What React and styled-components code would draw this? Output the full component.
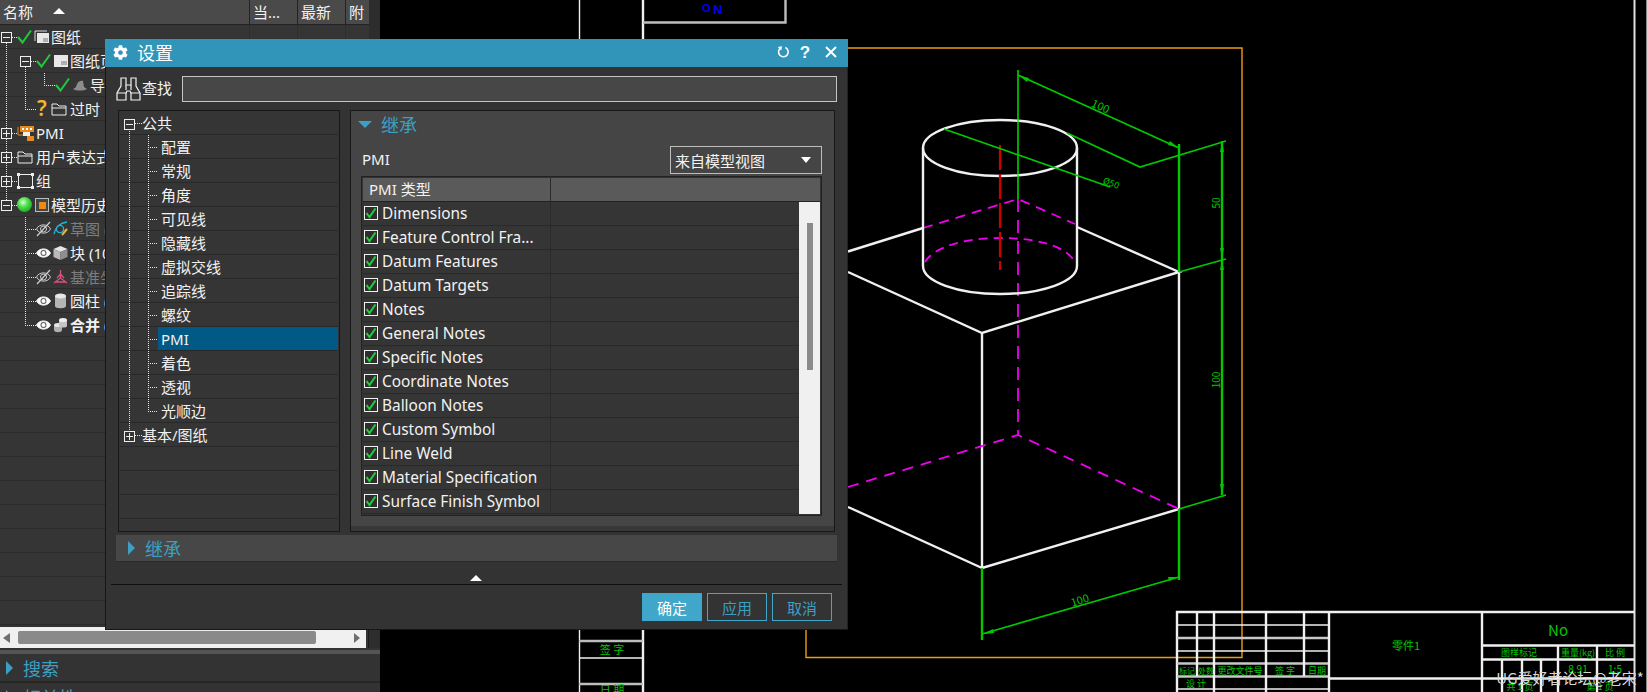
import React from "react";
import styled, { createGlobalStyle } from "styled-components";
import { FaCog } from "react-icons/fa";

const GlobalStyle = createGlobalStyle`
  html, body { margin: 0; padding: 0; background: #000; overflow: hidden; }
  * { box-sizing: border-box; }
  body {
    font-family: "Noto Sans", "Noto Sans CJK SC", sans-serif;
    font-size: 15px;
    color: #f2f2f2;
  }
`;

const Page = styled.div`
  position: relative;
  display: flex;
  width: 1647px;
  height: 692px;
  overflow: hidden;
`;

/* ---------- left navigator ---------- */

const Navigator = styled.aside`
  flex: 0 0 380px;
  display: flex;
  flex-direction: column;
  height: 692px;
  overflow: hidden;
  background: #333;
`;

const NavFrame = styled.div`
  display: flex;
  flex-direction: column;
  flex: 0 0 648px;
  border-right: 11px solid #2d2d2d;
  box-shadow: inset -1px 0 0 #1b1b1b;
`;

const HeaderRow = styled.div`
  display: flex;
  flex: 0 0 25px;
  gap: 1px;
  border-bottom: 1px solid #232323;
  background: #232323;
`;

const HeaderCell = styled.div`
  flex: 0 0 ${(p) => p.$w}px;
  display: flex;
  align-items: center;
  gap: 20px;
  padding: 0 0 2px 3px;
  background: #4a4a4a;
  overflow: hidden;
  white-space: nowrap;
`;

const SortMark = styled.span`
  width: 0;
  height: 0;
  border-left: 6px solid transparent;
  border-right: 6px solid transparent;
  border-bottom: 6px solid #fff;
`;

const NavRows = styled.div`
  flex: 1;
  min-height: 0;
  overflow: hidden;
`;

const NavRow = styled.div`
  display: flex;
  align-items: center;
  height: 24px;
  border-bottom: 1px solid #2a2a2a;
  white-space: nowrap;
  background-color: #353535;
  background-image:
    linear-gradient(#2e2e2e, #2e2e2e),
    linear-gradient(#2e2e2e, #2e2e2e),
    linear-gradient(#2e2e2e, #2e2e2e);
  background-size: 1px 100%;
  background-repeat: no-repeat;
  background-position: 249px 0, 297px 0, 345px 0;
`;

const guideImage = (kind) => {
  const v = "repeating-linear-gradient(to bottom, #e4e4e4 0 1px, transparent 1px 2px)";
  const h = "repeating-linear-gradient(to right, #e4e4e4 0 1px, transparent 1px 2px)";
  if (kind === "v") return v;
  if (kind === "n") return "none";
  return `${v}, ${h}`;
};

const guideSize = (kind) => {
  if (kind === "t") return "1px 100%, 100% 1px";
  if (kind === "e" || kind === "s") return "1px 12px, 100% 1px";
  return "1px 100%";
};

const guidePos = (kind, x) => {
  if (kind === "s") return `${x}px 12px, ${x}px 12px`;
  if (kind === "t" || kind === "e") return `${x}px 0, ${x}px 12px`;
  return `${x}px 0`;
};

const Guide = styled.span`
  flex: 0 0 ${(p) => p.$w}px;
  align-self: stretch;
  display: flex;
  align-items: center;
  background-repeat: no-repeat;
  background-image: ${(p) => guideImage(p.$kind)};
  background-size: ${(p) => guideSize(p.$kind)};
  background-position: ${(p) => guidePos(p.$kind, p.$x)};
`;

const ExpandBox = styled.span`
  width: 11px;
  height: 11px;
  margin-left: ${(p) => p.$x - 5}px;
  margin-top: ${(p) => p.$dy ?? 1}px;
  border: 1px solid #eee;
  background-color: #353535;
  background-repeat: no-repeat;
  background-image: linear-gradient(#eee, #eee)
    ${(p) => (p.$open ? "" : ", linear-gradient(#eee, #eee)")};
  background-size: 7px 1px ${(p) => (p.$open ? "" : ", 1px 7px")};
  background-position: center;
`;

const NavIcon = styled.svg`
  flex: 0 0 auto;
  display: block;
  margin-right: ${(p) => p.$gap ?? 2}px;
`;

const QuestionMark = styled.span`
  flex: 0 0 14px;
  color: #f2b632;
  font-weight: 600;
  font-size: 21px;
  line-height: 1;
`;

const NavLabel = styled.span`
  color: ${(p) => (p.$muted ? "#7d7d7d" : "#f2f2f2")};
  font-weight: ${(p) => (p.$bold ? 700 : 400)};
`;

const NavScroll = styled.div`
  display: flex;
  align-items: center;
  flex: 0 0 21px;
  margin-right: 3px;
  padding: 0 6px 0 3px;
  background: #f0f0f0;
`;

const ScrollArrow = styled.span`
  width: 0;
  height: 0;
  border-top: 5px solid transparent;
  border-bottom: 5px solid transparent;
  ${(p) => (p.$right ? "border-left: 6px solid #6e6e6e;" : "border-right: 7px solid #6e6e6e;")}
`;

const NavThumb = styled.span`
  width: 298px;
  height: 13px;
  margin: 0 auto 0 8px;
  border-radius: 2px;
  background: #8a8a8a;
`;

const NavSplit = styled.div`
  flex: 0 0 4px;
  margin-top: 2px;
  background: #555;
`;

const NavSection = styled.div`
  display: flex;
  align-items: center;
  flex: 0 0 28px;
  gap: 10px;
  padding: 1px 0 0 6px;
  border-bottom: 2px solid #262626;
  color: #3c9fc4;
  font-size: 18px;
`;

const SideTriangle = styled.span`
  width: 0;
  height: 0;
  border-top: 7px solid transparent;
  border-bottom: 7px solid transparent;
  border-left: 7px solid #3c9fc4;
`;

/* ---------- little tree icons ---------- */

const Svg = ({ w = 15, h = 16, gap, children }) => (
  <NavIcon width={w} height={h} viewBox={`0 0 ${w} ${h}`} $gap={gap}>
    {children}
  </NavIcon>
);

const Tick = () => (
  <Svg w={15} h={16}>
    <path d="M1 8 L5.5 13.5 L14 1.5" fill="none" stroke="#21c93a" strokeWidth="2" />
  </Svg>
);

const SheetsIcon = () => (
  <Svg>
    <path d="M1 12V2h12" fill="none" stroke="#ddd" strokeWidth="1" />
    <rect x="3" y="4" width="12" height="10" fill="#e8e8e8" />
    <path d="M9 10h5M9 12h5" stroke="#777" />
  </Svg>
);

const SheetIcon = () => (
  <Svg>
    <rect x="1" y="2" width="14" height="12" fill="#e8e8e8" />
    <path d="M8 9h6M8 11h6" stroke="#777" />
  </Svg>
);

const HatIcon = () => (
  <Svg w={16}>
    <path d="M1 12c2-1 3-1 4-5 1-3 5-4 6-3l1 6 3 2c-3 2-11 2-14 0z" fill="#8c8c8c" />
  </Svg>
);

const FolderIcon = () => (
  <Svg w={16} gap={3}>
    <path d="M1 14V3h5l2 2h7v9zM1 7h14" fill="none" stroke="#eee" strokeWidth="1" />
  </Svg>
);

const PmiIcon = () => (
  <Svg w={17} gap={2}>
    <rect x="3" y="1" width="14" height="6" fill="#e58a1f" />
    <path d="M5 3h2v2H5zM9 3h2v2H9zM13 3h2v2h-2z" fill="#fff" />
    <path d="M1 2v8h6" fill="none" stroke="#e58a1f" />
    <rect x="6" y="7" width="7" height="4" fill="#eee" />
    <rect x="10" y="11" width="7" height="5" fill="#e58a1f" />
  </Svg>
);

const GroupIcon = () => (
  <Svg w={17} gap={2}>
    <rect x="1.5" y="1.5" width="14" height="13" fill="none" stroke="#eee" />
    <path d="M0 0h3v3H0zM14 0h3v3h-3zM0 13h3v3H0zM14 13h3v3h-3z" fill="#eee" />
  </Svg>
);

const BallIcon = () => (
  <NavIcon width="15" height="15" viewBox="0 0 15 15" $gap={2}>
    <defs>
      <radialGradient id="ball" cx="0.4" cy="0.35" r="0.7">
        <stop offset="0" stopColor="#d8ffd8" />
        <stop offset="0.45" stopColor="#4ee04e" />
        <stop offset="1" stopColor="#1aa81a" />
      </radialGradient>
    </defs>
    <circle cx="7.5" cy="7.5" r="7.5" fill="url(#ball)" />
  </NavIcon>
);

const ModelIcon = () => (
  <Svg>
    <rect x="1.5" y="1.5" width="13" height="13" fill="#444" stroke="#bbb" />
    <rect x="5" y="5" width="7" height="7" fill="#ee8a17" />
  </Svg>
);

const EyeIcon = ({ off }) => (
  <Svg w={15} gap={2}>
    <path
      d="M0.5 8C3 2.5 12 2.5 14.5 8C12 13.5 3 13.5 0.5 8z"
      fill={off ? "none" : "#fff"}
      stroke={off ? "#cfcfcf" : "#eee"}
    />
    <circle cx="7.5" cy="8" r="3" fill={off ? "none" : "#5a5a5a"} stroke={off ? "#cfcfcf" : "none"} />
    {off ? <path d="M1 15 L14 1" stroke="#cfcfcf" strokeWidth="1.2" /> : <circle cx="7.5" cy="8" r="2" fill="#fff" />}
  </Svg>
);

const SketchIcon = () => (
  <Svg>
    <path d="M1 13 C3 5 7 2 14 1" fill="none" stroke="#25b6dc" strokeWidth="1.3" />
    <circle cx="7" cy="8" r="3.6" fill="none" stroke="#25b6dc" strokeWidth="1.3" />
    <path d="M9 14 L14 8" stroke="#e8b53a" strokeWidth="2" />
  </Svg>
);

const CubeIcon = () => (
  <Svg>
    <path d="M7.5 1 L14.5 4 L7.5 7 L0.5 4z" fill="#e6e6e6" />
    <path d="M0.5 4 L7.5 7V15L0.5 12z" fill="#b9b9b9" />
    <path d="M14.5 4 L7.5 7V15L14.5 12z" fill="#8f8f8f" />
  </Svg>
);

const DatumIcon = () => (
  <Svg>
    <path d="M7.5 1V9M7.5 9L1 14M7.5 9L14 14M3 13H12M4 9L7.5 5 11 9" fill="none" stroke="#d6537b" strokeWidth="1.3" />
  </Svg>
);

const CylinderIcon = () => (
  <Svg>
    <path d="M2 3v10c0 3 11 3 11 0V3z" fill="#b5b5b5" />
    <ellipse cx="7.5" cy="3" rx="5.5" ry="2.4" fill="#e8e8e8" />
  </Svg>
);

const UnionIcon = () => (
  <Svg>
    <path d="M1 8v5c0 3 8 3 8 0V8z" fill="#b0b0b0" />
    <ellipse cx="5" cy="8" rx="4" ry="2" fill="#e5e5e5" />
    <path d="M6 3v6c0 2 8 2 8 0V3z" fill="#c4c4c4" />
    <ellipse cx="10" cy="3" rx="4" ry="2" fill="#eee" />
  </Svg>
);

const EyeOff = () => <EyeIcon off />;

const navItems = [
  { cells: [["s", 17, "open"]], icons: [Tick, SheetsIcon], label: "图纸" },
  { cells: [["v", 19], ["s", 17, "open"]], icons: [Tick, SheetIcon], label: "图纸页" },
  { cells: [["v", 19], ["v", 19], ["e", 17]], icons: [Tick, HatIcon], label: "导入的" },
  { cells: [["v", 19], ["e", 18]], icons: ["?", FolderIcon], label: "过时" },
  { cells: [["t", 17, "closed"]], icons: [PmiIcon], label: "PMI" },
  { cells: [["t", 17, "closed"]], icons: [FolderIcon], label: "用户表达式" },
  { cells: [["t", 17, "closed"]], icons: [GroupIcon], label: "组" },
  { cells: [["e", 17, "open"]], icons: [BallIcon, ModelIcon], label: "模型历史记录" },
  { cells: [["n", 19], ["t", 17]], icons: [EyeOff, SketchIcon], label: "草图 (1)", muted: true },
  { cells: [["n", 19], ["t", 17]], icons: [EyeIcon, CubeIcon], label: "块 (100x100)" },
  { cells: [["n", 19], ["t", 17]], icons: [EyeOff, DatumIcon], label: "基准坐标系 (0)", muted: true },
  { cells: [["n", 19], ["t", 17]], icons: [EyeIcon, CylinderIcon], label: "圆柱 (2)" },
  { cells: [["n", 19], ["e", 17]], icons: [EyeIcon, UnionIcon], label: "合并 (3)", bold: true },
];

const NavTreeRow = ({ item }) => (
  <NavRow>
    {item.cells.map(([kind, w, box], i) => (
      <Guide key={i} $kind={kind} $w={w} $x={6}>
        {box ? <ExpandBox $x={6} $open={box === "open"} /> : null}
      </Guide>
    ))}
    {item.icons.map((Icon, i) =>
      Icon === "?" ? <QuestionMark key={i}>?</QuestionMark> : <Icon key={i} />
    )}
    <NavLabel $muted={item.muted} $bold={item.bold}>
      {item.label}
    </NavLabel>
  </NavRow>
);

const Navigation = () => (
  <Navigator>
    <NavFrame>
      <HeaderRow>
        <HeaderCell $w={249}>
          名称
          <SortMark />
        </HeaderCell>
        <HeaderCell $w={47}>当...</HeaderCell>
        <HeaderCell $w={47}>最新</HeaderCell>
        <HeaderCell $w={23}>附</HeaderCell>
      </HeaderRow>
      <NavRows>
        {navItems.map((item) => (
          <NavTreeRow key={item.label} item={item} />
        ))}
        {Array.from({ length: 12 }, (_, i) => (
          <NavRow key={i} />
        ))}
      </NavRows>
      <NavScroll>
        <ScrollArrow />
        <NavThumb />
        <ScrollArrow $right />
      </NavScroll>
    </NavFrame>
    <NavSplit />
    <NavSection>
      <SideTriangle />
      搜索
    </NavSection>
    <NavSection>
      <SideTriangle />
      相关性
    </NavSection>
  </Navigator>
);

/* ---------- settings dialog ---------- */

const Dialog = styled.section`
  position: absolute;
  left: 105px;
  top: 39px;
  width: 743px;
  height: 591px;
  display: flex;
  flex-direction: column;
  background: #333;
  border-left: 1px solid #161616;
  border-right: 1px solid #222;
  border-bottom: 1px solid #161616;
`;

const TitleBar = styled.header`
  flex: 0 0 27px;
  display: flex;
  align-items: center;
  margin: 0 -1px 0 -1px;
  padding: 0 11px 2px 8px;
  background: #3195b9;
  color: #fff;
  font-size: 18px;
`;

const TitleText = styled.span`
  margin-left: 9px;
  flex: 1;
`;

const TitleActions = styled.div`
  display: flex;
  align-items: center;
  gap: 9px;
`;

const HelpMark = styled.span`
  font-family: "Liberation Sans", sans-serif;
  font-weight: 700;
  font-size: 17px;
  line-height: 1;
  width: 12px;
  margin-right: 5px;
  text-align: center;
`;

const SearchRow = styled.div`
  display: flex;
  align-items: center;
  flex: 0 0 26px;
  margin-top: 9px;
  padding-left: 10px;
`;

const SearchLabel = styled.span`
  flex: 0 0 auto;
  width: 40px;
  margin-left: 1px;
  padding-bottom: 4px;
`;

const SearchInput = styled.div`
  flex: 0 0 655px;
  height: 26px;
  border: 1px solid #c4c4c4;
  background: #474747;
`;

const Content = styled.div`
  flex: 0 0 422px;
  min-height: 0;
  display: flex;
  gap: 10px;
  margin-top: 8px;
  padding-left: 12px;
`;

const TreePane = styled.div`
  flex: 0 0 222px;
  padding: 0 1px;
  border: 1px solid #181818;
  overflow: hidden;
`;

const TreeRow = styled.div`
  display: flex;
  align-items: center;
  height: 24px;
  border-bottom: 1px solid #292929;
  background: #353535;
  white-space: nowrap;
`;

const TreeLabel = styled.span`
  flex: 1;
  align-self: stretch;
  display: flex;
  align-items: center;
  padding-left: ${(p) => p.$pad}px;
  background: ${(p) => (p.$active ? "#005a85" : "transparent")};
`;

const SettingsPane = styled.div`
  flex: 0 0 485px;
  display: flex;
  flex-direction: column;
  padding: 1px;
  border: 1px solid #181818;
  box-shadow: inset 0 -5px 0 #383838;
  background: #454545;
`;

const GroupHeader = styled.div`
  display: flex;
  align-items: center;
  width: 100%;
  height: ${(p) => p.$h}px;
  flex: 0 0 auto;
  gap: ${(p) => p.$gap}px;
  padding-left: ${(p) => p.$pad}px;
  color: #3c9fc4;
  font-size: 18px;
`;

const DownTriangle = styled.span`
  width: 0;
  height: 0;
  border-left: 7px solid transparent;
  border-right: 7px solid transparent;
  border-top: 7px solid #3c9fc4;
`;

const PmiRow = styled.div`
  display: flex;
  align-items: center;
  justify-content: space-between;
  flex: 0 0 28px;
  margin: 10px 11px 2px 9px;
`;

const PmiLabel = styled.span`
  padding: 0 0 2px 1px;
`;

const Select = styled.div`
  display: flex;
  align-items: center;
  justify-content: space-between;
  width: 152px;
  height: 28px;
  padding: 0 10px 0 4px;
  border: 1px solid #bdbdbd;
`;

const SelectCaret = styled.span`
  width: 0;
  height: 0;
  border-left: 5px solid transparent;
  border-right: 5px solid transparent;
  border-top: 6px solid #fff;
`;

const Table = styled.div`
  display: flex;
  flex-direction: column;
  flex: 0 0 340px;
  margin: 0 11px 0 9px;
  padding: 1px;
  border: 1px solid #222;
  background: #333;
`;

const TableHead = styled.div`
  flex: 0 0 24px;
  display: flex;
  border-bottom: 1px solid #222;
  background: #5a5a5a;
`;

const HeadCell = styled.div`
  flex: 0 0 ${(p) => p.$w};
  display: flex;
  align-items: center;
  padding: 0 0 2px 6px;
  ${(p) => (p.$grow ? "flex: 1;" : "border-right: 1px solid #2a2a2a;")}
`;

const TableBody = styled.div`
  flex: 1;
  min-height: 0;
  display: flex;
  overflow: hidden;
`;

const TableRows = styled.div`
  flex: 1;
`;

const TableRow = styled.div`
  display: flex;
  height: 24px;
  border-bottom: 1px solid #292929;
  background: #353535;
`;

const NameCell = styled.div`
  flex: 0 0 188px;
  display: flex;
  align-items: center;
  gap: 4px;
  padding: 0 0 1px 1px;
  border-right: 1px solid #2b2b2b;
  font-size: 15.4px;
  white-space: nowrap;
`;

const CheckBox = styled.span`
  flex: 0 0 14px;
  height: 14px;
  display: flex;
  border: 1px solid #f0f0f0;
  background: #2e2e2e;
`;

const ScrollTrack = styled.div`
  flex: 0 0 21px;
  padding: 21px 0 0 8px;
  background: #f0f0f0;
`;

const ScrollThumb = styled.div`
  width: 6px;
  height: 147px;
  background: #8a8a8a;
`;

const CollapsedBar = styled.div`
  flex: 0 0 27px;
  display: flex;
  margin: 3px 10px 0 10px;
  background: #474747;
  border-bottom: 1px solid #2a2a2a;
`;

const CollapseRow = styled.div`
  flex: 0 0 22px;
  display: flex;
  align-items: flex-end;
  justify-content: center;
  padding-bottom: 3px;
  margin-left: -2px;
`;

const UpTriangle = styled.span`
  width: 0;
  height: 0;
  border-left: 6px solid transparent;
  border-right: 6px solid transparent;
  border-bottom: 6px solid #fff;
`;

const Divider = styled.div`
  flex: 0 0 1px;
  margin: 0 5px;
  background: #0f0f0f;
`;

const Footer = styled.footer`
  display: flex;
  justify-content: flex-end;
  gap: 5px;
  margin-top: 8px;
  padding-right: 15px;
`;

const ActionButton = styled.button`
  width: 60px;
  height: 28px;
  padding: 0;
  font: inherit;
  color: ${(p) => (p.$primary ? "#fff" : "#3c9fc4")};
  background: ${(p) => (p.$primary ? "#3fa7c9" : "transparent")};
  border: 1px solid #3fa7c9;
`;

const BinocularIcon = () => (
  <svg width="25" height="24" viewBox="0 0 25 24" fill="none" stroke="#f2f2f2" strokeWidth="1.2">
    <path d="M5 1h5v7h5V1h5v8l4 7v7h-9v-7l-1-2h-3l-1 2v7H1v-7l4-7z" />
    <path d="M1 16h9.5M14.5 16h9.5M10 8v5M15 8v5" />
  </svg>
);

const DialogTick = () => (
  <svg width="12" height="12" viewBox="0 0 12 12">
    <path d="M1.5 6 L4.5 10 L10.5 1.5" fill="none" stroke="#23cf3c" strokeWidth="2" />
  </svg>
);

const RefreshIcon = () => (
  <svg width="13" height="14" viewBox="0 0 14 14" fill="none">
    <path d="M4 2.6 A5.2 5.2 0 1 0 9 2.2" stroke="#fff" strokeWidth="1.7" />
    <path d="M0.8 1.5 L5.5 0.8 L4.6 5.4z" fill="#fff" />
  </svg>
);

const CloseIcon = () => (
  <svg width="12" height="12" viewBox="0 0 12 12">
    <path d="M1 1L11 11M11 1L1 11" stroke="#fff" strokeWidth="1.9" />
  </svg>
);

const treeItems = ["配置", "常规", "角度", "可见线", "隐藏线", "虚拟交线", "追踪线", "螺纹", "PMI", "着色", "透视", "光顺边"];

const pmiTypes = [
  "Dimensions",
  "Feature Control Fra...",
  "Datum Features",
  "Datum Targets",
  "Notes",
  "General Notes",
  "Specific Notes",
  "Coordinate Notes",
  "Balloon Notes",
  "Custom Symbol",
  "Line Weld",
  "Material Specification",
  "Surface Finish Symbol",
];

const SettingsDialog = () => (
  <Dialog>
    <TitleBar>
      <FaCog size={15} />
      <TitleText>设置</TitleText>
      <TitleActions>
        <RefreshIcon />
        <HelpMark>?</HelpMark>
        <CloseIcon />
      </TitleActions>
    </TitleBar>
    <SearchRow>
      <BinocularIcon />
      <SearchLabel>查找</SearchLabel>
      <SearchInput />
    </SearchRow>
    <Content>
      <TreePane>
        <TreeRow>
          <Guide $kind="s" $w={22} $x={9}>
            <ExpandBox $x={9} $dy={3} $open />
          </Guide>
          <TreeLabel $pad={0}>公共</TreeLabel>
        </TreeRow>
        {treeItems.map((name, i) => (
          <TreeRow key={name}>
            <Guide $kind="v" $w={19} $x={9} />
            <Guide $kind={i === treeItems.length - 1 ? "e" : "t"} $w={19} $x={9} />
            <TreeLabel $pad={3} $active={name === "PMI"}>
              {name}
            </TreeLabel>
          </TreeRow>
        ))}
        <TreeRow>
          <Guide $kind="e" $w={22} $x={9}>
            <ExpandBox $x={9} $dy={3} />
          </Guide>
          <TreeLabel $pad={0}>基本/图纸</TreeLabel>
        </TreeRow>
        {Array.from({ length: 4 }, (_, i) => (
          <TreeRow key={i} />
        ))}
      </TreePane>
      <SettingsPane>
        <GroupHeader $h={24} $gap={9} $pad={6}>
          <DownTriangle />
          继承
        </GroupHeader>
        <PmiRow>
          <PmiLabel>PMI</PmiLabel>
          <Select>
            来自模型视图
            <SelectCaret />
          </Select>
        </PmiRow>
        <Table>
          <TableHead>
            <HeadCell $w="188px">PMI 类型</HeadCell>
            <HeadCell $grow />
          </TableHead>
          <TableBody>
            <TableRows>
              {pmiTypes.map((name) => (
                <TableRow key={name}>
                  <NameCell>
                    <CheckBox>
                      <DialogTick />
                    </CheckBox>
                    {name}
                  </NameCell>
                </TableRow>
              ))}
            </TableRows>
            <ScrollTrack>
              <ScrollThumb />
            </ScrollTrack>
          </TableBody>
        </Table>
      </SettingsPane>
    </Content>
    <CollapsedBar>
      <GroupHeader $h={26} $gap={10} $pad={12}>
        <SideTriangle />
        继承
      </GroupHeader>
    </CollapsedBar>
    <CollapseRow>
      <UpTriangle />
    </CollapseRow>
    <Divider />
    <Footer>
      <ActionButton $primary>确定</ActionButton>
      <ActionButton>应用</ActionButton>
      <ActionButton>取消</ActionButton>
    </Footer>
  </Dialog>
);

/* ---------- cad drawing ---------- */

const Canvas = styled.main`
  flex: 1;
  background: #000;
`;

const Sheet = styled.svg`
  display: block;
  font-family: "Noto Sans CJK SC", "Noto Sans", sans-serif;
`;

const WHITE = "#f0f0f0";
const GREEN = "#00c800";
const LIME = "#00f000";
const MAGENTA = "#f000f0";
const ORANGE = "#f09a14";

const Line = ({ d, c = WHITE, w = 2.4, dash }) => (
  <path d={d} fill="none" stroke={c} strokeWidth={w} strokeDasharray={dash} />
);

const Label = ({ x, y, size = 10, c = GREEN, rotate, children }) => (
  <text
    x={x}
    y={y}
    fontSize={size}
    fill={c}
    textAnchor="middle"
    transform={rotate ? `rotate(${rotate} ${x} ${y})` : undefined}
  >
    {children}
  </text>
);

const CadDrawing = () => (
  <Canvas>
    <Sheet width="1267" height="692" viewBox="380 0 1267 692">
      {/* paper border */}
      <Line d="M806 630V657.5H1242V48H848" c={ORANGE} w={1.4} />
      <Line d="M1634.5 0V692" c="#e0e0e0" w={2} />
      <Line d="M1646.5 0V692" c="#8a8a8a" w={1} />

      {/* top left title strip */}
      <Line d="M579.5 0V39" w={1.4} />
      <Line d="M643 0V39" />
      <Line d="M643 22.5H785.5V0" c="#bdbdbd" />
      <text x="702" y="12" fontSize="11" fontWeight="700" fill="#0000f0" fontFamily="Liberation Sans">O</text>
      <text x="713" y="14" fontSize="13" fontWeight="700" fill="#0000f0" fontFamily="Liberation Sans">N</text>

      {/* bottom left strip */}
      <Line d="M579.5 630V692" w={1.4} />
      <Line d="M643 630V692" />
      <Line d="M579 641H643" c="#bdbdbd" />
      <Line d="M579 658H643" w={1.4} />
      <Line d="M579 684H643" c="#bdbdbd" />
      <Label x={612} y={654} size={11}>签 字</Label>
      <Label x={612} y={694} size={11}>日 期</Label>

      {/* block */}
      <Line d="M848 251.5L923 228" />
      <Line d="M1077 227L1179 272L982 333L848 272" />
      <Line d="M982 333V568M1179 272V509M982 568L1179 509M848 507L982 568" />
      <Line d="M923 228L1018 199L1075 224" c={MAGENTA} w={1.8} dash="10 7" />
      <Line d="M1018 199V435" c={MAGENTA} w={1.8} dash="13 8" />
      <Line d="M848 487L1018 435L1179 509" c={MAGENTA} w={1.8} dash="11 8" />

      {/* cylinder */}
      <ellipse cx="1000" cy="148" rx="77" ry="28" fill="none" stroke={WHITE} strokeWidth="2.4" />
      <Line d="M923 148V266A77 28 0 0 0 1077 266V148" />
      <Line d="M925 262C935 245 970 238 1000 238C1035 238 1065 245 1075 262" c={MAGENTA} w={1.8} dash="9 6" />
      <Line d="M1000 145V270" c="#d00000" w={2.2} dash="25 4" />

      {/* dimensions */}
      <Line d="M1018 70V199" c={LIME} w={1.4} />
      <Line d="M1018 75L1179 148" c={GREEN} w={1.8} />
      <Line d="M1067 133L1140 167L1226 141" c={GREEN} w={1.8} />
      <Line d="M944 129L1110 187" c={GREEN} w={1.8} />
      <Line d="M1179 144V272" c={GREEN} />
      <Line d="M1222 141V495" c={GREEN} />
      <Line d="M1179 272L1226 259M1179 509L1226 495" c={GREEN} w={1.8} />
      <Line d="M982 568V640M1179 509V580" c={GREEN} />
      <Line d="M982 634L1179 577" c={GREEN} w={1.8} />
      <path
        d="M1019 75.5L1029 78L1027 82zM1178 147.5L1168 145L1170 141zM983 634L993 629L994 633zM1178 577L1168 577L1169 581zM1222 142L1220 152H1224zM1222 258L1220 248H1224zM1222 260L1220 270H1224zM1222 494L1220 484H1224z"
        fill={GREEN}
      />
      <Label x={1099} y={110} size={11} rotate={24}>100</Label>
      <Label x={1110} y={186} size={9} rotate={20}>Ø50</Label>
      <Label x={1220} y={203} size={10} rotate={-90}>50</Label>
      <Label x={1220} y={380} size={10} rotate={-90}>100</Label>
      <Label x={1081} y={604} size={11} rotate={-17}>100</Label>

      {/* title block */}
      <Line d="M1177 692V612H1634" />
      <Line d="M1177 625H1329M1177 651H1329M1177 689H1329" w={1.4} />
      <Line d="M1177 638H1329M1177 663.5H1329M1177 676.5H1329" c="#c8c8c8" />
      <Line d="M1197 612V676M1214 612V692M1266 612V692M1304 612V676M1329 612V692" />
      <Line d="M1482 612V692M1329 678.5H1634M1482 645.5H1634M1482 659.5H1634" />
      <Line d="M1558 645V692M1597 645V692M1502 659V692M1522 659V692M1541 659V692" />
      <Label x={1558} y={636} size={15}>No</Label>
      <Label x={1406} y={650} size={11}>零件1</Label>
      <Label x={1519} y={656} size={9}>图样标记</Label>
      <Label x={1578} y={656} size={9}>重量(kg)</Label>
      <Label x={1615} y={656} size={9}>比 例</Label>
      <Label x={1578} y={673} size={10}>8.91</Label>
      <Label x={1615} y={673} size={10}>1:5</Label>
      <Label x={1187} y={674} size={8}>标记</Label>
      <Label x={1206} y={674} size={8}>处数</Label>
      <Label x={1240} y={674} size={9}>更改文件号</Label>
      <Label x={1285} y={674} size={9}>签 字</Label>
      <Label x={1317} y={674} size={9}>日期</Label>
      <Label x={1196} y={687} size={9}>设 计</Label>
      <Label x={1520} y={690} size={9}>共 1 页</Label>
      <Label x={1600} y={690} size={9}>第 1 页</Label>
      <Label x={1570} y={684} size={15} c="#d8d8d8">UG爱好者论坛@老宋*</Label>
    </Sheet>
  </Canvas>
);

export default function App() {
  return (
    <Page>
      <GlobalStyle />
      <Navigation />
      <CadDrawing />
      <SettingsDialog />
    </Page>
  );
}
